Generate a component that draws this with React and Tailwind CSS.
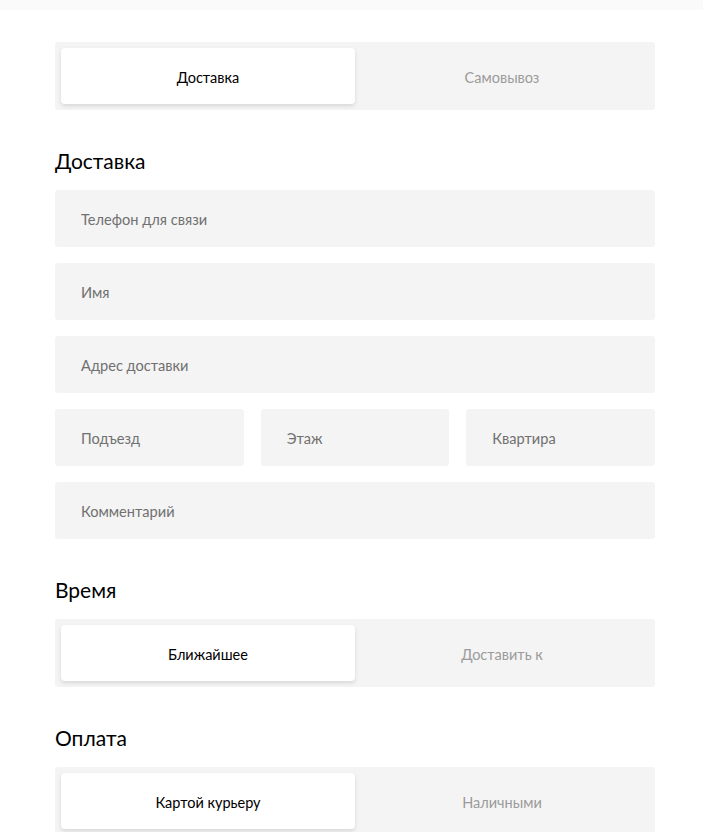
import React from "react";

function Segmented({ active, inactive }) {
  return (
    <div className="flex h-[68px] rounded-[3px] bg-[#f4f4f4] p-[6px]">
      <div className="flex flex-1 items-center justify-center rounded-[4px] bg-white pt-[3px] text-[14.5px] text-black shadow-[0_2px_4px_rgba(0,0,0,0.12)]">
        {active}
      </div>
      <div className="flex flex-1 items-center justify-center pt-[3px] text-[14.5px] text-[#9b9b9b]">
        {inactive}
      </div>
    </div>
  );
}

function Field({ label, className = "" }) {
  return (
    <div className={"flex h-[57px] items-center rounded-[3px] bg-[#f4f4f4] pl-[26px] pt-[3px] text-[14.6px] text-[#707070] " + className}>
      {label}
    </div>
  );
}

function Heading({ children }) {
  return <h2 className="mt-[37px] mb-[15px] h-[28px] text-[21px] leading-[28px] text-black">{children}</h2>;
}

export default function App() {
  return (
    <div className="min-h-[832px] bg-white font-['Lato',sans-serif]">
      <div className="h-[10px] bg-[#fafafa]" />
      <div className="w-[600px] pt-[32px] ml-[55px]">
        <Segmented active="Доставка" inactive="Самовывоз" />
        <Heading>Доставка</Heading>
        <div className="flex flex-col gap-[16px]">
          <Field label="Телефон для связи" />
          <Field label="Имя" />
          <Field label="Адрес доставки" />
          <div className="flex gap-[17px]">
            <Field label="Подъезд" className="flex-1" />
            <Field label="Этаж" className="flex-1" />
            <Field label="Квартира" className="flex-1" />
          </div>
          <Field label="Комментарий" />
        </div>
        <Heading>Время</Heading>
        <Segmented active="Ближайшее" inactive="Доставить к" />
        <Heading>Оплата</Heading>
        <Segmented active="Картой курьеру" inactive="Наличными" />
      </div>
    </div>
  );
}
